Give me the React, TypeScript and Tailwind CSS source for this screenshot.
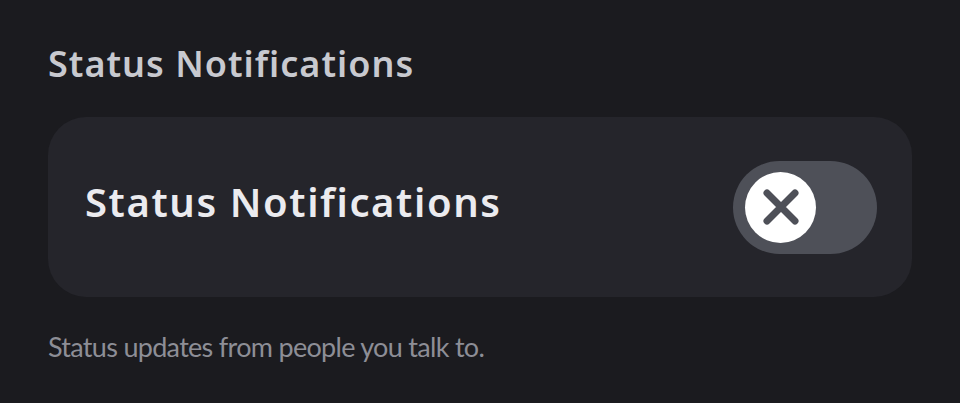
const font = { fontFamily: '"Noto Sans", "Open Sans", sans-serif' };
const caption = { fontFamily: 'Lato, "Noto Sans", sans-serif' };

function Toggle() {
  return (
    <div className="flex h-[93px] w-[144px] items-center rounded-full bg-[#4e5058] pl-[12px]">
      <div className="flex h-[71px] w-[71px] items-center justify-center rounded-full bg-white">
        <svg width="48" height="48" viewBox="0 0 24 24" fill="none">
          <path
            d="M5 5L19 19M19 5L5 19"
            stroke="#4e5058"
            strokeWidth="3.5"
            strokeLinecap="round"
          />
        </svg>
      </div>
    </div>
  );
}

export default function App() {
  return (
    <div className="h-[403px] w-[960px] bg-[#1b1b1f] px-[48px] pt-[46px]" style={font}>
      <h2 className="text-[36px] font-semibold leading-[36px] tracking-[1px] text-[#c8c9cf]">
        Status Notifications
      </h2>
      <div className="mt-[35px] flex h-[180px] items-center justify-between rounded-[38px] bg-[#25252b] pl-[37px] pr-[35px]">
        <span className="pb-[10px] text-[40px] font-semibold tracking-[1.6px] text-[#ebebef]">
          Status Notifications
        </span>
        <Toggle />
      </div>
      <p className="mt-[30px] text-[27px] leading-[40px] tracking-[-0.7px] text-[#8d8e96]" style={caption}>
        Status updates from people you talk to.
      </p>
    </div>
  );
}
